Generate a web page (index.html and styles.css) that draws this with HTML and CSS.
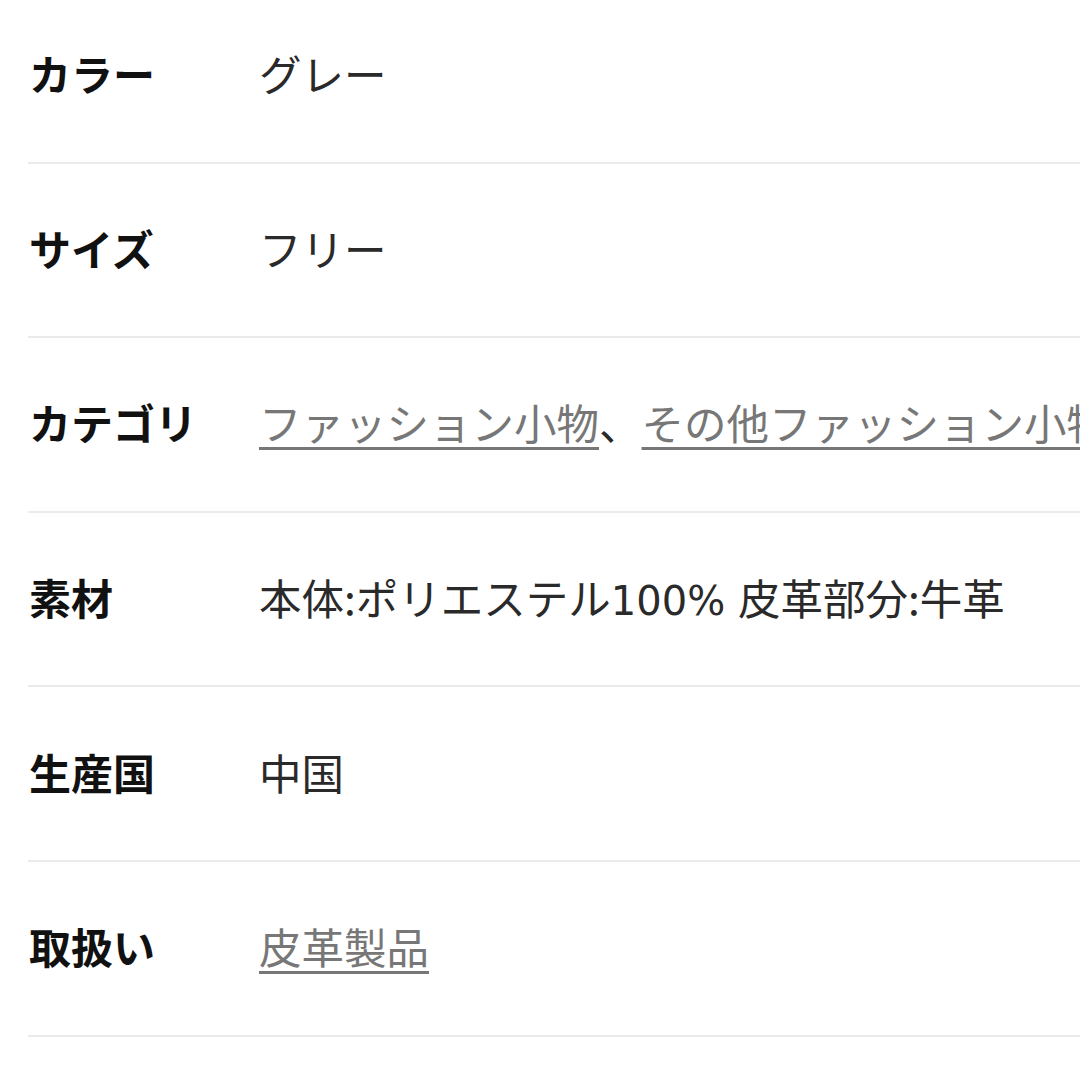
FILE: index.html
```html
<!DOCTYPE html>
<html lang="ja">
  <head>
    <meta charset="UTF-8" />
    <meta name="viewport" content="width=device-width, initial-scale=1.0" />
    <title>商品の情報</title>
    <link rel="stylesheet" href="styles.css">
  </head>
  <body>
    <div class="spec-list">
      <div class="spec-row">
        <div class="spec-label">カラー</div>
        <div class="spec-value">グレー</div>
      </div>
      <div class="spec-row">
        <div class="spec-label">サイズ</div>
        <div class="spec-value">フリー</div>
      </div>
      <div class="spec-row">
        <div class="spec-label">カテゴリ</div>
        <div class="spec-value">
          <a href="#" class="spec-link">ファッション小物</a>、<a href="#" class="spec-link">その他ファッション小物</a>
        </div>
      </div>
      <div class="spec-row">
        <div class="spec-label">素材</div>
        <div class="spec-value">本体:ポリエステル<span class="spec-num">100% </span>皮革部分:牛革</div>
      </div>
      <div class="spec-row">
        <div class="spec-label">生産国</div>
        <div class="spec-value">中国</div>
      </div>
      <div class="spec-row">
        <div class="spec-label">取扱い</div>
        <div class="spec-value">
          <a href="#" class="spec-link">皮革製品</a>
        </div>
      </div>
    </div>
  </body>
</html>
```

FILE: styles.css
```css
html,
body {
  margin: 0;
  overflow: hidden;
}
body {
  font-family: "Noto Sans CJK JP", "Noto Sans", sans-serif;
  background-color: #fff;
  color: #222;
}
.spec-list {
  margin-top: -11px;
  padding-left: 28px;
}
.spec-row {
  display: flex;
  align-items: center;
  box-sizing: border-box;
  height: 174.6px;
  padding-bottom: 5px;
  border-bottom: 2px solid #ebebeb;
  white-space: nowrap;
}
.spec-label {
  width: 230px;
  flex-shrink: 0;
  font-size: 42px;
  font-weight: bold;
  color: #111;
  padding-left: 1px;
}
.spec-value {
  font-size: 42.5px;
  color: #2a2a2a;
}
.spec-num {
  font-family: "DejaVu Sans", sans-serif;
  font-size: 40px;
}
.spec-link {
  color: #777;
  text-decoration: underline;
  text-decoration-thickness: 3px;
  text-underline-offset: 7px;
}
```
